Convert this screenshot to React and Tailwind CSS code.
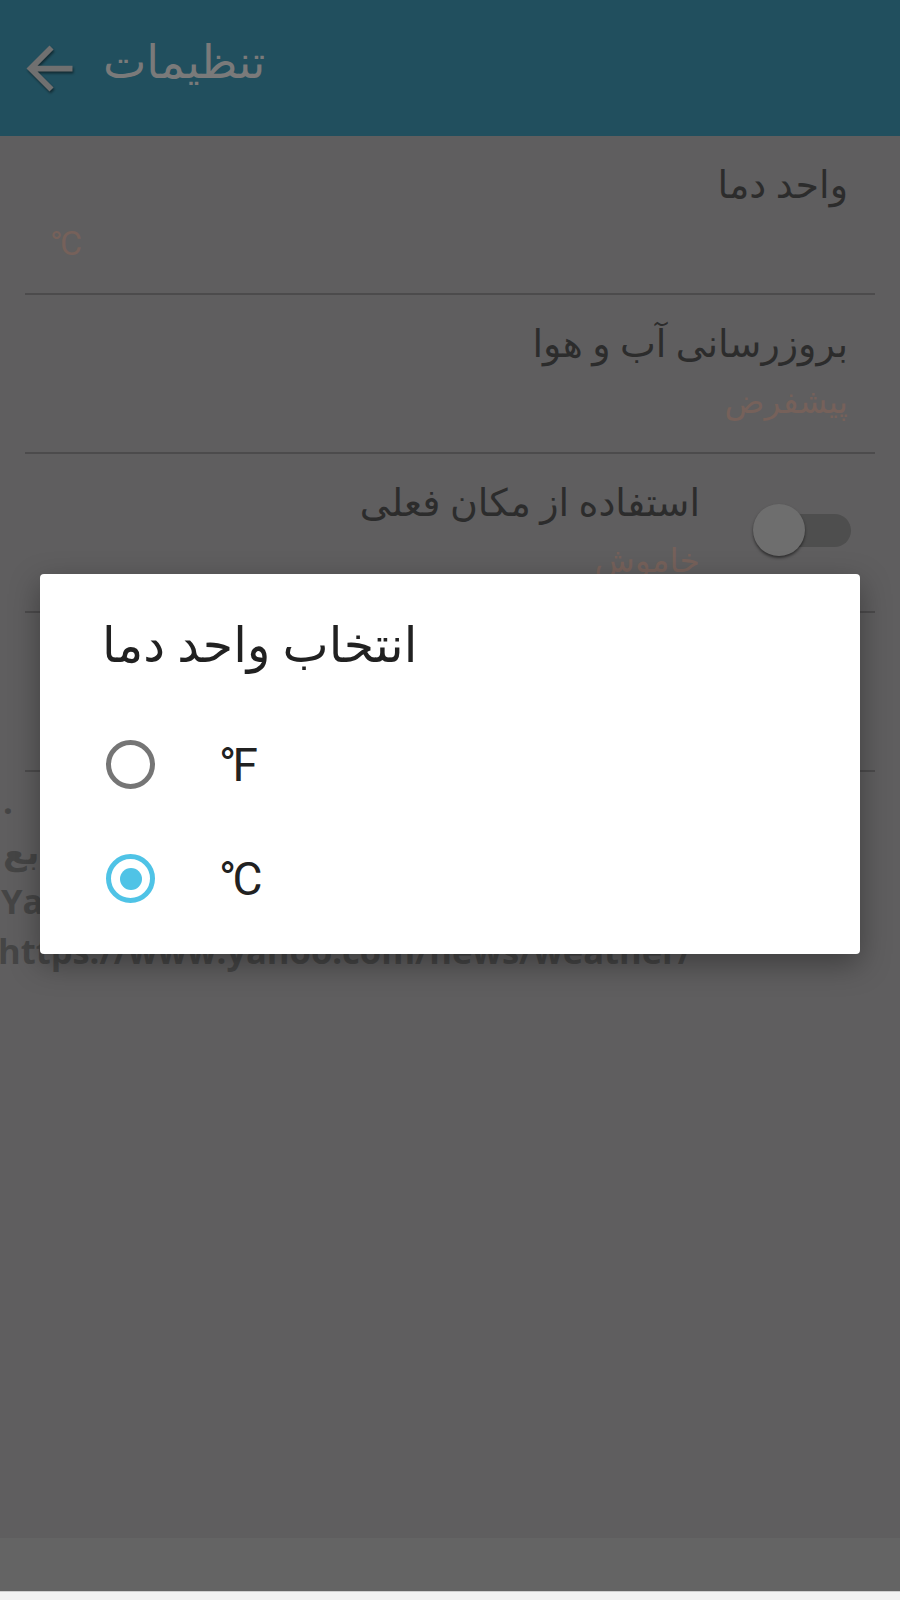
import { useState } from 'react';

const rows = [
  { id: 'unit', title: 'واحد دما', summary: '°C', ltrSummary: true },
  { id: 'update', title: 'بروزرسانی آب و هوا', summary: 'پیشفرض' },
  { id: 'location', title: 'استفاده از مکان فعلی', summary: 'خاموش', toggle: true },
  { id: 'lang', title: 'زبان', summary: 'فارسی' },
];

const BackArrow = () => (
  <svg width="69" height="69" viewBox="0 0 24 24" className="drop-shadow-[1px_2px_1px_rgba(0,0,0,0.45)]">
    <path fill="#707070" d="M20 11H7.83l5.59-5.59L12 4l-8 8 8 8 1.41-1.41L7.83 13H20v-2z" />
  </svg>
);

const Radio = ({ checked }) => (
  <div
    className={`w-[49px] h-[49px] rounded-full border-[5px] flex items-center justify-center ${
      checked ? 'border-[#4fc3e6]' : 'border-[#757575]'
    }`}
  >
    {checked && <div className="w-[22px] h-[22px] rounded-full bg-[#4fc3e6]" />}
  </div>
);

const App = () => {
  const [unit, setUnit] = useState('C');

  return (
    <div className="relative w-[900px] h-[1600px] overflow-hidden flex flex-col bg-[#5f5e5f] font-['Roboto','DejaVu_Sans',sans-serif]">
      {/* Toolbar */}
      <div className="h-[136px] shrink-0 bg-[#214f5e] flex items-center pl-[15px] gap-[19px]">
        <BackArrow />
        <span className="text-[46px] leading-none text-[#7a7a7a] pb-[12px]">تنظیمات</span>
      </div>

      {/* Settings list */}
      <div className="flex-1">
        <div className="mx-[25px]">
          {rows.map(row => (
            <div key={row.id} className="h-[159px] border-b-[2px] border-[#4c4b4c] flex items-start">
              <div className="flex-1 pt-[23px]">
                <div
                  dir="rtl"
                  className={`text-[38px] leading-[52px] text-[#2c2c2c] ${row.toggle ? 'pr-[175px]' : 'pr-[27px]'}`}
                >
                  {row.title}
                </div>
                {row.ltrSummary ? (
                  <div className="pl-[25px] mt-[10px] text-[34px] leading-[44px] tracking-[-0.08em] text-[#76615a]">
                    {row.summary}
                  </div>
                ) : (
                  <div
                    dir="rtl"
                    className={`mt-[10px] text-[33px] leading-[44px] text-[#76615a] ${row.toggle ? 'pr-[175px]' : 'pr-[27px]'}`}
                  >
                    {row.summary}
                  </div>
                )}
              </div>
              {row.toggle && (
                <div className="absolute left-[753px] top-[504px] w-[98px] h-[52px] flex items-center">
                  <div className="absolute right-0 w-[84px] h-[33px] rounded-full bg-[#4e4e4e]" />
                  <div className="relative w-[52px] h-[52px] rounded-full bg-[#6e6e6e] shadow-[0_2px_3px_rgba(0,0,0,0.5)]" />
                </div>
              )}
            </div>
          ))}
        </div>

        {/* Attribution */}
        <div className="-ml-[2px] mt-[4px] font-bold text-[34.5px] leading-[50px] text-[#454545] font-['Open_Sans','DejaVu_Sans',sans-serif]">
          <div className="pl-[5px]">.</div>
          <div dir="rtl" className="w-fit pl-[5px]">اطلاعات آب و هوا از منابع</div>
          <div className="whitespace-nowrap pl-[3px]">Yahoo Weather</div>
          <div className="whitespace-nowrap">https://www.yahoo.com/news/weather/</div>
        </div>
      </div>

      {/* Bottom bar */}
      <div className="h-[53px] shrink-0 bg-[#646464]" />
      <div className="h-[9px] shrink-0 bg-[#f2f2f2] border-t border-[#cfcfcf]" />

      {/* Dialog */}
      <div className="absolute left-[40px] top-[574px] w-[820px] h-[380px] bg-white rounded-[4px] shadow-[0_10px_30px_rgba(0,0,0,0.35)]">
        <div dir="rtl" className="w-fit ml-[62px] mt-[40px] text-[49px] leading-[64px] text-[#212121]">
          انتخاب واحد دما
        </div>
        <div className="mt-[62px] flex flex-col gap-[65px]">
          {[
            { key: 'F', label: '°F' },
            { key: 'C', label: '°C' },
          ].map(opt => (
            <button
              key={opt.key}
              onClick={() => setUnit(opt.key)}
              className="flex items-center h-[49px] pl-[66px] text-left"
            >
              <Radio checked={unit === opt.key} />
              <span className="ml-[64px] text-[46px] leading-none tracking-[-0.08em] text-[#212121]">
                {opt.label}
              </span>
            </button>
          ))}
        </div>
      </div>
    </div>
  );
};

export default App;
